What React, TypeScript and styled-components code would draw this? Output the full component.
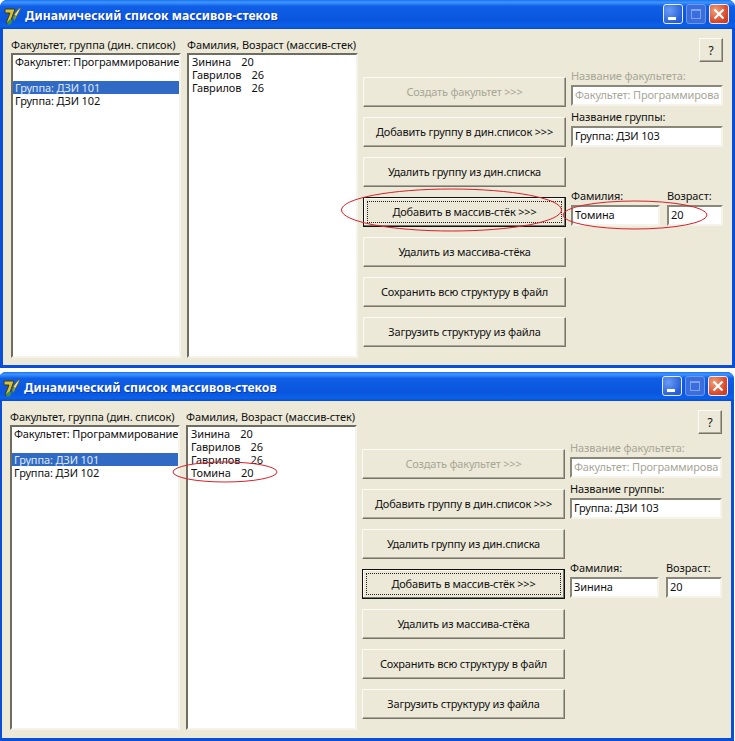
import React from "react";
import styled, { createGlobalStyle } from "styled-components";

const Global = createGlobalStyle`
  html, body { margin: 0; padding: 0; background: #fff; }
  body { width: 735px; height: 741px; overflow: hidden; font-family: "Noto Sans", "Liberation Sans", sans-serif; font-size: 11px; color: #111; }
`;

const Page = styled.div`
  display: flex;
  flex-direction: column;
  gap: 4px;
  width: 735px;
`;

const WindowFrame = styled.section<{ $first?: boolean }>`
  position: relative;
  display: flex;
  flex-direction: column;
  box-sizing: border-box;
  width: 735px;
  height: ${(p) => (p.$first ? 368 : 369)}px;
  margin-left: ${(p) => (p.$first ? 0 : -1)}px;
  background: #0a4fd8;
  border-radius: 7px 7px 0 0;
  padding: 0 3px 3px 3px;
`;

const TitleBar = styled.header`
  display: flex;
  align-items: center;
  height: 29px;
  flex: none;
  padding: 0 3px 0 1px;
  margin: 0 -3px;
  border-radius: 7px 7px 0 0;
  background: linear-gradient(180deg, #1c74ee 0, #3d95ff 8%, #0f5fe6 22%, #0a55de 70%, #0b61ea 90%, #0a4bcb 100%);
`;

const TitleText = styled.h1`
  margin: 2px 0 0 2px;
  flex: 1;
  font-family: "Noto Sans", sans-serif;
  font-size: 12.2px;
  font-weight: 700;
  color: #fff;
  text-shadow: 1px 1px 0 #0a3aa8;
  white-space: nowrap;
`;

const CaptionButtons = styled.div`
  display: flex;
  gap: 3px;
  margin: 0 3px 1px 0;
`;

const CaptionButton = styled.span<{ $tone: "min" | "max" | "close" }>`
  display: flex;
  align-items: center;
  justify-content: center;
  box-sizing: border-box;
  width: 20px;
  height: 20px;
  border: 1px solid ${(p) => (p.$tone === "max" ? "#6f97ea" : "#e8eefb")};
  border-radius: 3px;
  background: ${(p) =>
    p.$tone === "close"
      ? "radial-gradient(circle at 30% 30%, #f0a078, #d9472a 65%, #c23a1c)"
      : p.$tone === "max"
      ? "#3a6ede"
      : "radial-gradient(circle at 30% 30%, #6a9cf4, #2a62dc 70%, #2256cc)"};
`;

const Client = styled.div<{ $first?: boolean }>`
  flex: 1;
  display: flex;
  min-height: 0;
  background: #ece9d8;
  padding: 8px 9px ${(p) => (p.$first ? 7 : 8)}px 8px;
`;

const ListColumn = styled.div<{ $wide?: boolean }>`
  display: flex;
  flex: none;
  flex-direction: column;
  width: ${(p) => (p.$wide ? 171 : 170)}px;
  margin-right: ${(p) => (p.$wide ? 5 : 6)}px;
`;

const ColumnLabel = styled.label`
  display: block;
  height: 15px;
  line-height: 15px;
  white-space: nowrap;
  letter-spacing: -0.1px;
`;

const ListBox = styled.div`
  flex: 1;
  box-sizing: border-box;
  background: #fff;
  border: 2px solid;
  border-color: #6f6c60 #f5f3ea #f5f3ea #6f6c60;
  margin-top: 1px;
  overflow: hidden;
`;

const ListRow = styled.div<{ $selected?: boolean; $person?: boolean }>`
  height: 13px;
  line-height: 13px;
  padding-left: ${(p) => (p.$person ? 3 : 2)}px;
  white-space: pre;
  letter-spacing: -0.12px;
  word-spacing: ${(p) => (p.$person ? 0.7 : 0)}px;
  background: ${(p) => (p.$selected ? "#316ac5" : "transparent")};
  color: ${(p) => (p.$selected ? "#dfe8f8" : "#111")};
`;

const ButtonColumn = styled.div`
  display: flex;
  flex: none;
  flex-direction: column;
  gap: 10px;
  width: 203px;
  padding-top: 40px;
`;

const PushButton = styled.button<{ $default?: boolean; $disabled?: boolean }>`
  position: relative;
  box-sizing: border-box;
  height: 30px;
  padding: 0 0 2px;
  font: inherit;
  letter-spacing: -0.2px;
  white-space: nowrap;
  background: #ece9d8;
  color: ${(p) => (p.$disabled ? "#a8a697" : "#111")};
  border: 1px solid;
  border-color: ${(p) => (p.$default ? "#111" : "#fbfaf4 #77756a #77756a #fbfaf4")};
  box-shadow: ${(p) => (p.$default ? "inset -1px -1px 0 #77756a, inset 1px 1px 0 #fbfaf4" : "inset -1px -1px 0 #aca899")};
`;

const FocusRing = styled.span`
  position: absolute;
  inset: 3px;
  border: 1px dotted #222;
`;

const FieldColumn = styled.div`
  display: flex;
  flex-direction: column;
  flex: none;
  width: 152px;
  margin-left: 5px;
`;

const HelpRow = styled.div`
  display: flex;
  justify-content: flex-end;
  align-items: flex-end;
  height: 25px;
  margin-bottom: 8px;
`;

const HelpButton = styled.button`
  box-sizing: border-box;
  width: 24px;
  height: 24px;
  padding: 0;
  font: inherit;
  font-size: 12px;
  color: #111;
  background: #ece9d8;
  border: 1px solid;
  border-color: #fbfaf4 #77756a #77756a #fbfaf4;
  box-shadow: inset -1px -1px 0 #aca899;
`;

const FieldLabel = styled.label<{ $disabled?: boolean }>`
  display: block;
  height: 13px;
  margin-bottom: 2px;
  line-height: 11px;
  white-space: nowrap;
  letter-spacing: -0.1px;
  color: ${(p) => (p.$disabled ? "#a8a697" : "#111")};
`;

const TextInput = styled.div<{ $disabled?: boolean }>`
  box-sizing: border-box;
  height: 21px;
  line-height: 15px;
  padding-left: 2px;
  white-space: nowrap;
  overflow: hidden;
  letter-spacing: -0.15px;
  background: #fff;
  color: ${(p) => (p.$disabled ? "#a8a697" : "#111")};
  border: 2px solid;
  border-color: #8a8778 #f5f3ea #f5f3ea #8a8778;
`;

const FieldGroup = styled.div<{ $top?: number }>`
  display: flex;
  flex-direction: column;
  margin-top: ${(p) => p.$top ?? 0}px;
`;

const PairRow = styled.div`
  display: flex;
  gap: 7px;
  margin-top: 43px;
`;

const SurnameField = styled(FieldGroup)`
  width: 89px;
`;

const AgeField = styled(FieldGroup)`
  width: 56px;
`;

const Annotation = styled.svg`
  position: absolute;
  left: 0;
  top: 0;
  width: 735px;
  height: 367px;
  pointer-events: none;
`;

const DelphiLogo = () => (
  <svg width="22" height="22" viewBox="0 0 22 22" aria-hidden>
    <path d="M4 5h10l-5 14H5l4-10H4z" fill="#d8c23a" stroke="#3c3a10" strokeWidth="1" />
    <path d="M6 18l3-2.5 2.5 1L10 20l-3 1z" fill="#3f8f4a" />
    <path d="M13 11c2-3 4-6 7-8-1 3-3 7-5 10z" fill="#efe27a" stroke="#5c5a20" strokeWidth=".7" />
    <path d="M12 13l3-2v3l-2 3z" fill="#7a9a3a" />
  </svg>
);

const WinControls = () => (
  <CaptionButtons>
    <CaptionButton $tone="min">
      <svg width="18" height="18" viewBox="0 0 18 18" aria-hidden><rect x="4" y="12" width="8" height="3" fill="#fff" /></svg>
    </CaptionButton>
    <CaptionButton $tone="max">
      <svg width="18" height="18" viewBox="0 0 18 18" aria-hidden><rect x="4.5" y="4.5" width="9" height="9" fill="none" stroke="#7fa2ee" /><rect x="4" y="4" width="10" height="2" fill="#7fa2ee" /></svg>
    </CaptionButton>
    <CaptionButton $tone="close">
      <svg width="18" height="18" viewBox="0 0 18 18" aria-hidden><path d="M4.5 4.5l9 9M13.5 4.5l-9 9" stroke="#fff" strokeWidth="2.2" /></svg>
    </CaptionButton>
  </CaptionButtons>
);

const actions = ["Добавить группу в дин.список >>>", "Удалить группу из дин.списка"];
const lowerActions = ["Удалить из массива-стёка", "Сохранить всю структуру в файл", "Загрузить структуру из файла"];

type DialogProps = {
  first?: boolean;
  people: string[];
  surname: string;
  annotations: React.ReactNode;
};

const Dialog = ({ first, people, surname, annotations }: DialogProps) => (
  <WindowFrame $first={first}>
    <TitleBar>
      <DelphiLogo />
      <TitleText>Динамический список массивов-стеков</TitleText>
      <WinControls />
    </TitleBar>
    <Client $first={first}>
      <ListColumn>
        <ColumnLabel>Факультет, группа (дин. список)</ColumnLabel>
        <ListBox>
          <ListRow>Факультет: Программирование</ListRow>
          <ListRow />
          <ListRow $selected>Группа: ДЗИ 101</ListRow>
          <ListRow>Группа: ДЗИ 102</ListRow>
        </ListBox>
      </ListColumn>
      <ListColumn $wide>
        <ColumnLabel>Фамилия, Возраст (массив-стек)</ColumnLabel>
        <ListBox>
          {people.map((p, i) => (
            <ListRow key={i} $person>{p}</ListRow>
          ))}
        </ListBox>
      </ListColumn>
      <ButtonColumn>
        <PushButton $disabled>Создать факультет &gt;&gt;&gt;</PushButton>
        {actions.map((a) => (
          <PushButton key={a}>{a}</PushButton>
        ))}
        <PushButton $default>
          <FocusRing />
          Добавить в массив-стёк &gt;&gt;&gt;
        </PushButton>
        {lowerActions.map((a) => (
          <PushButton key={a}>{a}</PushButton>
        ))}
      </ButtonColumn>
      <FieldColumn>
        <HelpRow>
          <HelpButton>?</HelpButton>
        </HelpRow>
        <FieldGroup>
          <FieldLabel $disabled>Название факультета:</FieldLabel>
          <TextInput $disabled>Факультет: Программирова</TextInput>
        </FieldGroup>
        <FieldGroup $top={5}>
          <FieldLabel>Название группы:</FieldLabel>
          <TextInput>Группа: ДЗИ 103</TextInput>
        </FieldGroup>
        <PairRow>
          <SurnameField>
            <FieldLabel>Фамилия:</FieldLabel>
            <TextInput>{surname}</TextInput>
          </SurnameField>
          <AgeField>
            <FieldLabel>Возраст:</FieldLabel>
            <TextInput>20</TextInput>
          </AgeField>
        </PairRow>
      </FieldColumn>
    </Client>
    {annotations}
  </WindowFrame>
);

export default function App() {
  return (
    <>
      <Global />
      <Page>
        <Dialog
          first
          people={["Зинина   20", "Гаврилов   26", "Гаврилов   26"]}
          surname="Томина"
          annotations={
            <Annotation viewBox="0 0 735 367" aria-hidden>
              <ellipse cx="451.5" cy="210" rx="110" ry="21" fill="none" stroke="#d8202a" />
              <ellipse cx="635" cy="215" rx="72" ry="14" fill="none" stroke="#d8202a" />
            </Annotation>
          }
        />
        <Dialog
          people={["Зинина   20", "Гаврилов   26", "Гаврилов   26", "Томина   20"]}
          surname="Зинина"
          annotations={
            <Annotation viewBox="0 0 735 367" aria-hidden>
              <ellipse cx="226" cy="100" rx="52" ry="10" fill="none" stroke="#d8202a" />
            </Annotation>
          }
        />
      </Page>
    </>
  );
}
